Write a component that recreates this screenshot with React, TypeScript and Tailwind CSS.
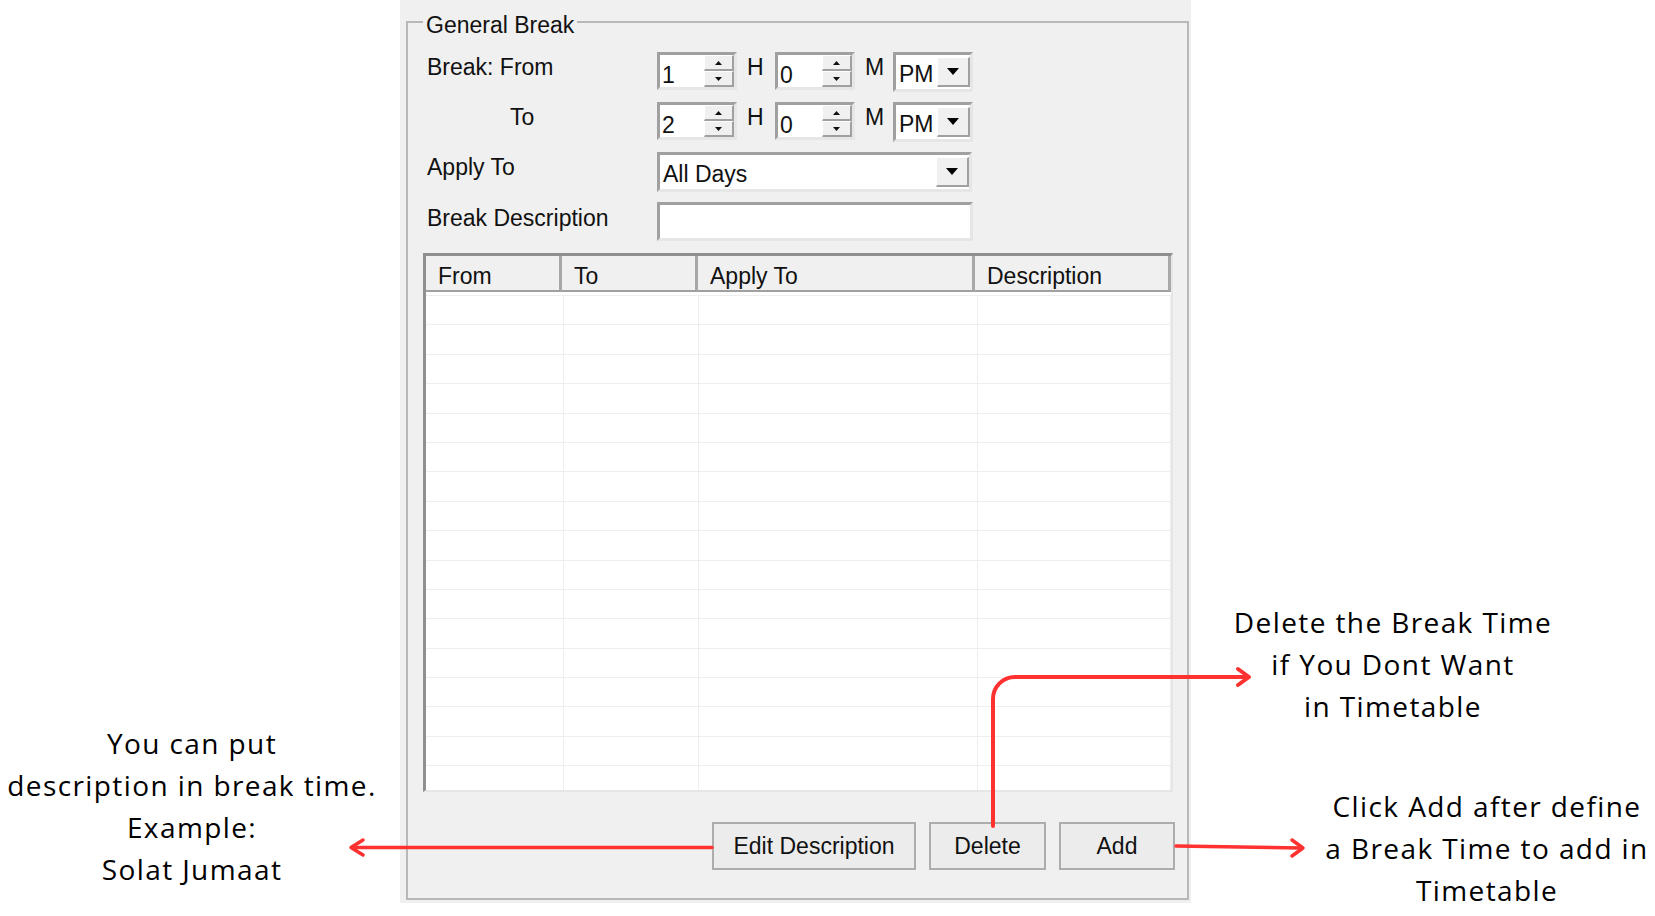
import React from "react";

const FORM_FONT = { fontFamily: '"Liberation Sans", Arial, sans-serif' };
const NOTE_FONT = { fontFamily: '"Open Sans", "Noto Sans", sans-serif' };

const sunken =
  "border-[3px] border-t-[#a0a0a0] border-l-[#a0a0a0] border-r-[#e6e6e6] border-b-[#e6e6e6]";
const raised =
  "bg-[#f0f0f0] border-t border-l border-t-white border-l-white border-r-2 border-b-2 border-r-[#a0a0a0] border-b-[#a0a0a0]";

const columns = [
  { label: "From", head: "w-[136px]", body: "w-[138px]" },
  { label: "To", head: "w-[136px]", body: "w-[135px]" },
  { label: "Apply To", head: "w-[277px]", body: "w-[279px]" },
  { label: "Description", head: "w-[196px]", body: "w-[193px]" },
];

function SpinButton({ up }: { up?: boolean }) {
  return (
    <div className={`flex flex-1 items-center justify-center ${raised}`}>
      <svg width="7" height="4" viewBox="0 0 7 4">
        <path d={up ? "M0 4 L3.5 0 L7 4Z" : "M0 0 L3.5 4 L7 0Z"} fill="#111" />
      </svg>
    </div>
  );
}

function Spinner({ value }: { value: string }) {
  return (
    <div className={`flex h-[38px] w-[80px] bg-white ${sunken}`}>
      <div className="flex-1 pl-[2px] pt-[7px] leading-[26px]">{value}</div>
      <div className="flex w-[30px] flex-col">
        <SpinButton up />
        <SpinButton />
      </div>
    </div>
  );
}

function Combo({ value, width }: { value: string; width: string }) {
  return (
    <div className={`flex h-[40px] ${width} bg-white ${sunken}`}>
      <div className="flex-1 pl-[3px] pt-[6px] leading-[26px]">{value}</div>
      <div className={`my-[2px] flex w-[33px] items-center justify-center ${raised}`}>
        <svg width="12" height="7" viewBox="0 0 12 7">
          <path d="M0 0 L12 0 L6 7Z" fill="#000" />
        </svg>
      </div>
    </div>
  );
}

function Unit({ children }: { children: string }) {
  return <div className="w-[38px] pl-[10px] pt-[2px] leading-[26px]">{children}</div>;
}

function TimeRow({ hour }: { hour: string }) {
  return (
    <div className="flex items-start">
      <Spinner value={hour} />
      <Unit>H</Unit>
      <Spinner value="0" />
      <Unit>M</Unit>
      <Combo value="PM" width="w-[80px]" />
    </div>
  );
}

function Button({ children, width }: { children: string; width: string }) {
  return (
    <button
      className={`h-[48px] ${width} border-2 border-[#adadad] bg-[#ececec] text-[23px] leading-[26px] text-[#111]`}
    >
      {children}
    </button>
  );
}

export default function App() {
  const rows = Array.from({ length: 17 });

  return (
    <div className="relative flex h-[916px] w-[1655px] overflow-hidden bg-white text-black">
      {/* Left note */}
      <aside
        className="w-[400px] shrink-0 pr-[16px] pt-[722px] text-center text-[28px] leading-[42px] tracking-[1.4px] whitespace-nowrap"
        style={NOTE_FONT}
      >
        <div>You can put</div>
        <div>description in break time.</div>
        <div>Example:</div>
        <div>Solat Jumaat</div>
      </aside>

      {/* Form panel */}
      <section
        className="h-[903px] w-[791px] shrink-0 bg-[#f0f0f0] pl-[6px] pr-[2px] pt-[9px] text-[23px] text-[#111]"
        style={FORM_FONT}
      >
        <fieldset className="h-[891px] border-2 border-[#b8b8b8]">
          <legend className="ml-[15px] px-[3px] pt-[6px] leading-[20px]">General Break</legend>

          <div className="ml-[19px] mt-[17px] grid grid-cols-[230px_auto] gap-y-[10px]">
            <div className="h-[40px] pt-[2px] leading-[26px]">Break: From</div>
            <TimeRow hour="1" />
            <div className="h-[40px] pl-[83px] pt-[2px] leading-[26px]">To</div>
            <TimeRow hour="2" />
            <div className="h-[40px] pt-[2px] leading-[26px]">Apply To</div>
            <Combo value="All Days" width="w-[315px]" />
            <div className="h-[40px] pt-[3px] leading-[26px]">Break Description</div>
            <div className={`h-[39px] w-[316px] bg-white ${sunken}`} />
          </div>

          {/* List view */}
          <div className="ml-[15px] mr-[14px] mt-[11px] flex h-[539px] flex-col overflow-hidden border-b-2 border-l-[3px] border-r-2 border-t-[3px] border-b-[#e6e6e6] border-l-[#8f8f8f] border-r-[#e6e6e6] border-t-[#8f8f8f] bg-white">
            <div className="flex h-[36px] shrink-0">
              {columns.map((c) => (
                <div
                  key={c.label}
                  className={`${c.head} border-b-2 border-r-[3px] border-b-[#a0a0a0] border-r-[#a8a8a8] bg-[#f0f0f0] pl-[12px] pt-[7px] leading-[26px]`}
                >
                  {c.label}
                </div>
              ))}
            </div>
            <div className="flex flex-col pt-[3px]">
              {rows.map((_, i) => (
                <div key={i} className="flex h-[29.4px] shrink-0 border-t border-[#eeeeee]">
                  {columns.map((c) => (
                    <div key={c.label} className={`${c.body} border-r border-[#eeeeee]`} />
                  ))}
                </div>
              ))}
            </div>
          </div>

          <div className="mr-[12px] mt-[30px] flex justify-end gap-[13px]">
            <Button width="w-[204px]">Edit Description</Button>
            <Button width="w-[117px]">Delete</Button>
            <Button width="w-[116px]">Add</Button>
          </div>
        </fieldset>
      </section>

      {/* Right notes */}
      <aside
        className="flex-1 text-center text-[28px] leading-[42px] tracking-[1.4px] whitespace-nowrap"
        style={NOTE_FONT}
      >
        <div className="ml-[2px] mt-[601px] w-[400px]">
          <div>Delete the Break Time</div>
          <div>if You Dont Want</div>
          <div>in Timetable</div>
        </div>
        <div className="ml-[126px] mt-[58px] w-[340px]">
          <div>Click Add after define</div>
          <div>a Break Time to add in</div>
          <div>Timetable</div>
        </div>
      </aside>

      {/* Callout arrows */}
      <svg
        className="pointer-events-none absolute inset-0"
        width="1655"
        height="916"
        viewBox="0 0 1655 916"
        fill="none"
        stroke="#ff3131"
        strokeLinecap="round"
        strokeLinejoin="round"
      >
        <path d="M712 847.5 H352" strokeWidth="3.5" />
        <path d="M363 840 L351 847.5 L363 855" strokeWidth="3.5" />
        <path d="M993 826 V699 A22 22 0 0 1 1015 677 H1247" strokeWidth="4" />
        <path d="M1238 669 L1249 677 L1238 685" strokeWidth="4" />
        <path d="M1176 846 L1302 848" strokeWidth="3.5" />
        <path d="M1292 840 L1303 848 L1292 856" strokeWidth="3.5" />
      </svg>
    </div>
  );
}
